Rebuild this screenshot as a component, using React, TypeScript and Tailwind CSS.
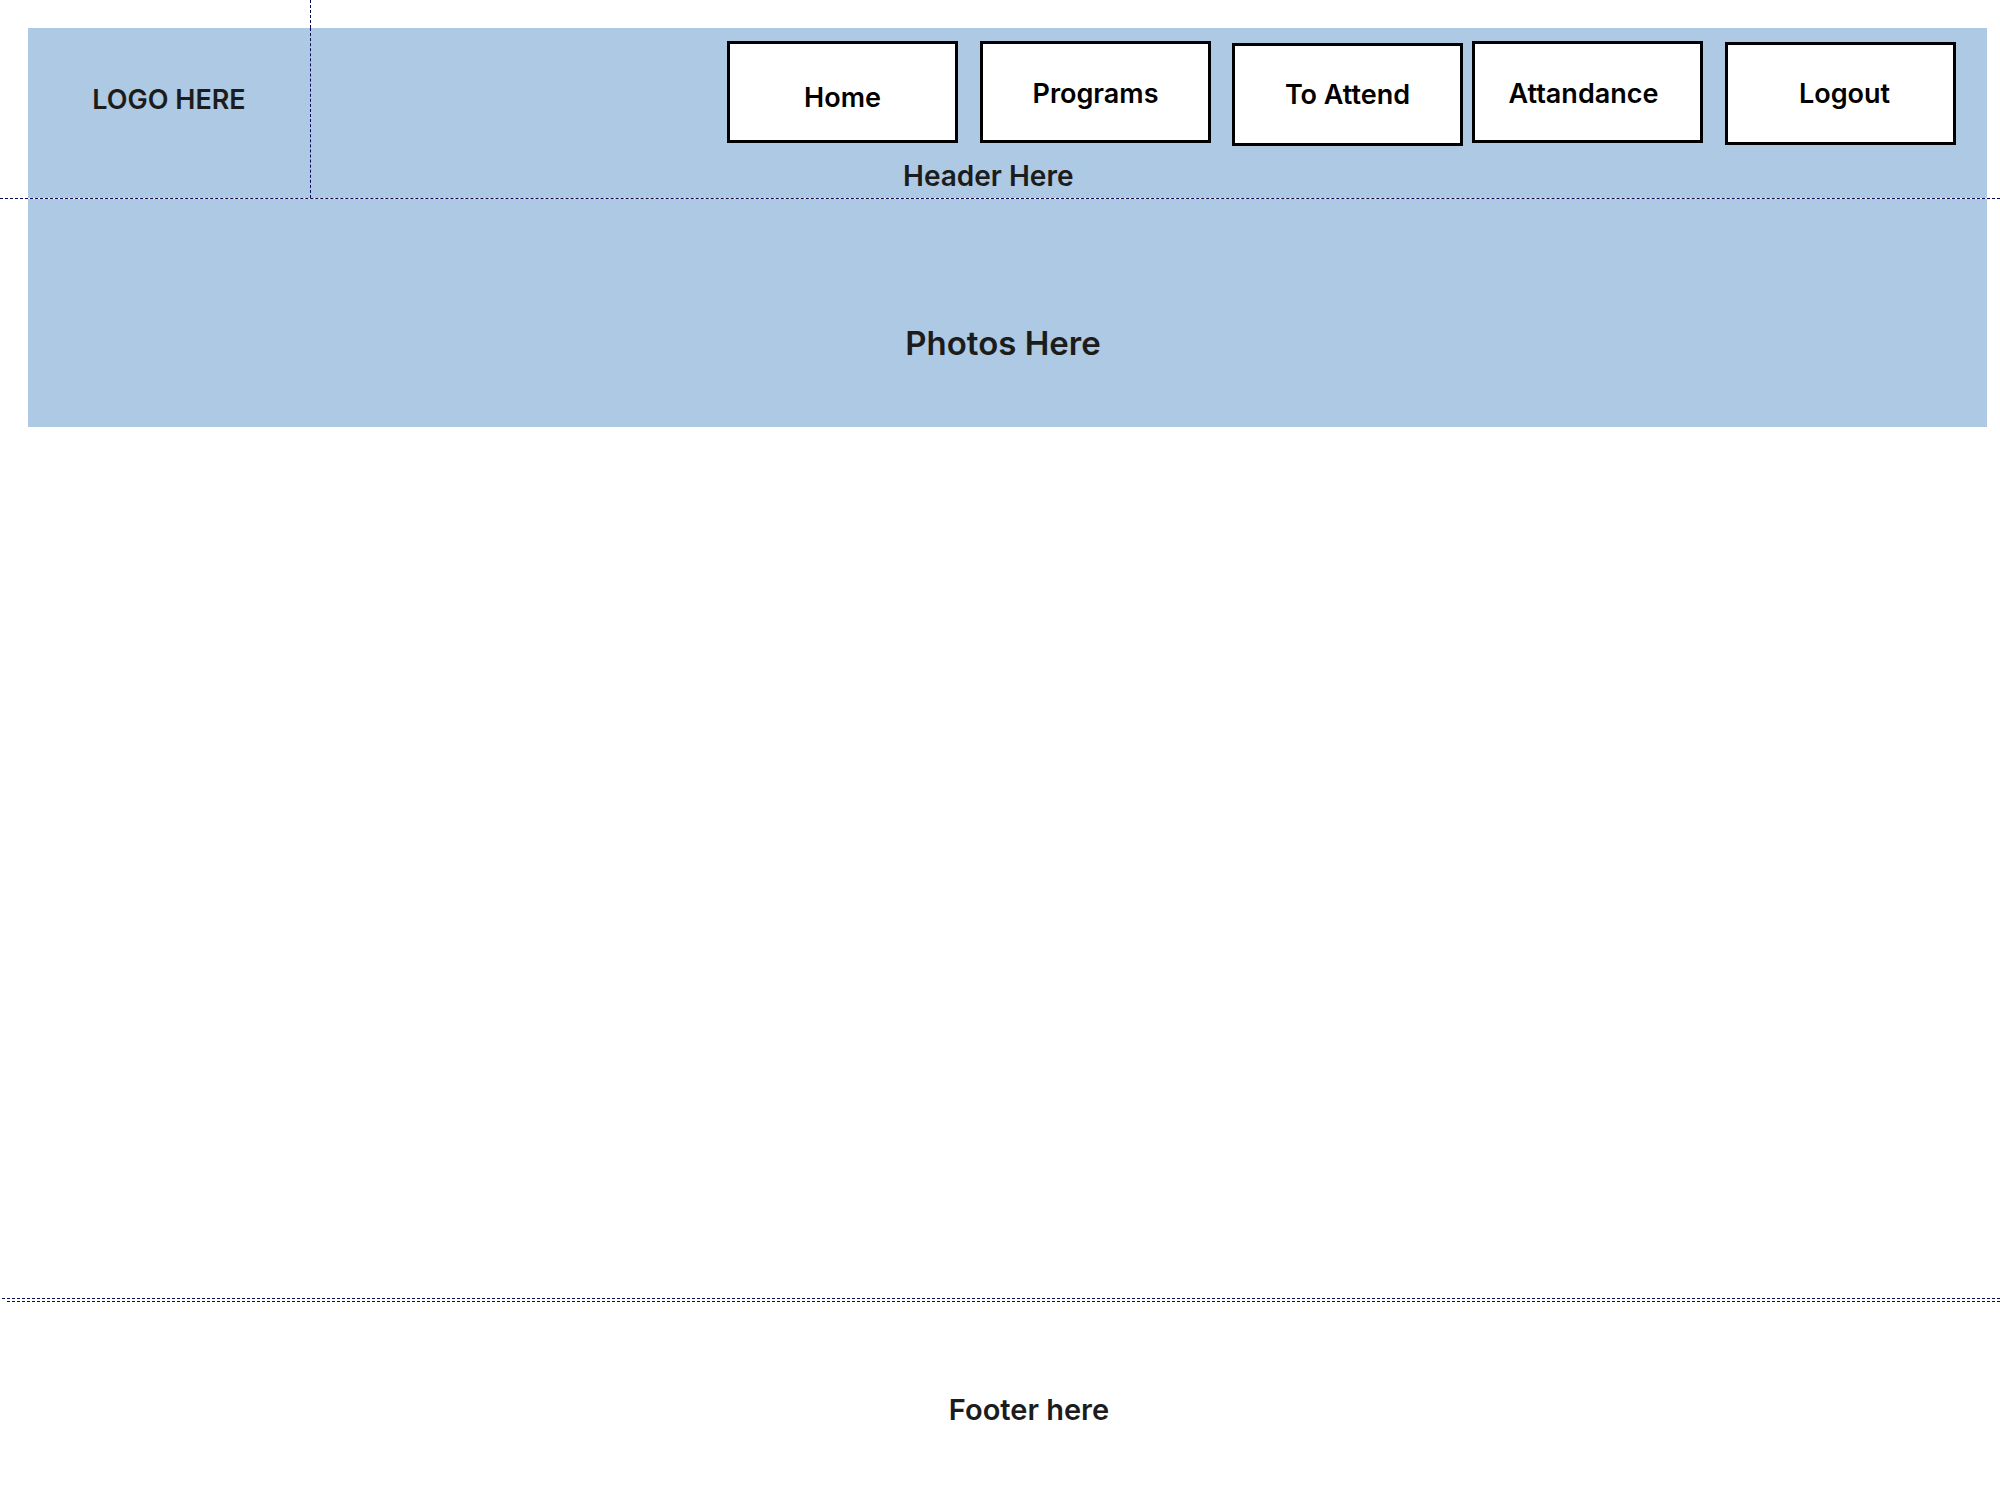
const navItems = [
  { label: "Home", box: "w-[231px] h-[102px] mt-[13px] pt-[12px]" },
  { label: "Programs", box: "w-[231px] h-[102px] mt-[13px] ml-[22px] pt-[4px]" },
  { label: "To Attend", box: "w-[231px] h-[103px] mt-[15px] ml-[21px] pt-[2px]" },
  { label: "Attandance", box: "w-[231px] h-[102px] mt-[13px] ml-[9px] pt-[4px] pr-[8px]" },
  { label: "Logout", box: "w-[231px] h-[103px] mt-[14px] ml-[22px] pt-[2px] pl-[8px]" },
];

function NavButton({ label, box }: { label: string; box: string }) {
  return (
    <div
      className={`${box} flex items-center justify-center border-[3px] border-black bg-white text-[27px] font-semibold text-black`}
    >
      {label}
    </div>
  );
}

export default function App() {
  return (
    <div className="min-h-[1500px] bg-white font-['Inter','Noto_Sans',sans-serif] text-[#1c1c1c]">
      {/* header */}
      <div className="flex h-[199px] border-b border-dashed border-[#0a0a5a]">
        <div className="flex w-[311px] flex-col">
          <div className="h-[28px] border-r border-dashed border-[#0a0a5a]" />
          <div className="ml-[28px] flex-1 border-r border-dashed border-[#0a0a5a] bg-[#aec9e3] pt-[52px] text-center text-[27px] font-semibold">
            LOGO HERE
          </div>
        </div>
        <div className="flex flex-1 flex-col pt-[28px] pr-[13px]">
          <div className="flex flex-1 flex-col bg-[#aec9e3]">
            <div className="flex h-[118px] items-start pl-[416px]">
              {navItems.map((item) => (
                <NavButton key={item.label} label={item.label} box={item.box} />
              ))}
            </div>
            <div className="mt-[13px] ml-[592px] text-[28px] leading-[34px] font-semibold">
              Header Here
            </div>
          </div>
        </div>
      </div>

      {/* photos */}
      <div className="ml-[28px] mr-[13px] h-[228px] bg-[#aec9e3] pt-[124px] pr-[9px] text-center text-[33px] leading-[40px] font-semibold">
        Photos Here
      </div>

      {/* footer */}
      <div className="mt-[871px]">
        <div className="ml-[2px] border-t border-dashed border-[#0a0a5a]" />
        <div className="ml-[7px] mt-[2px] border-t border-dashed border-[#0a0a5a]" />
        <div className="mt-[86px] pl-[58px] text-center text-[29px] font-semibold">
          Footer here
        </div>
      </div>
    </div>
  );
}
